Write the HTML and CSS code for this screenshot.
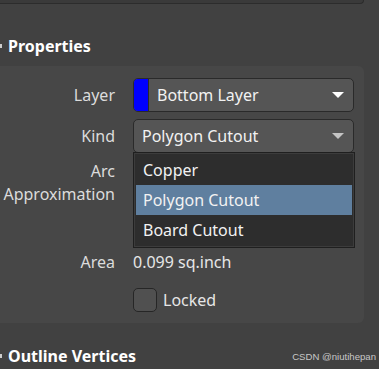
FILE: index.html
```html
<!DOCTYPE html>
<html>
<head>
    <title>Properties</title>
    <link rel="stylesheet" href="styles.css">
</head>
<body>
    <div class="top-box"></div>

    <div class="section-head">
        <span class="arrow"></span>
        <span>Properties</span>
    </div>

    <div class="panel">
        <div class="row">
            <label>Layer</label>
            <div class="combo">
                <span class="swatch"></span>
                <span class="combo-text">Bottom Layer</span>
                <span class="caret"></span>
            </div>
        </div>

        <div class="row kind-row">
            <label>Kind</label>
            <div class="combo">
                <span class="combo-text">Polygon Cutout</span>
                <span class="caret dim"></span>
            </div>
            <!-- open list of the Kind combo -->
            <ul class="drop-list">
                <li>Copper</li>
                <li class="selected">Polygon Cutout</li>
                <li>Board Cutout</li>
            </ul>
        </div>

        <div class="row arc-row">
            <label>Arc<br>Approximation</label>
        </div>

        <div class="row area-row">
            <label>Area</label>
            <div class="value">0.099 sq.inch</div>
        </div>

        <div class="row check-row">
            <label></label>
            <span class="checkbox"></span>
            <span class="value">Locked</span>
        </div>
    </div>

    <div class="section-head bottom">
        <span class="arrow"></span>
        <span>Outline Vertices</span>
        <span class="mark">CSDN @niutihepan</span>
    </div>
</body>
</html>
```

FILE: styles.css
```css
body {
    font-family: "Noto Sans", "Open Sans", sans-serif;
    background-color: #414141;
    color: #dcdcdc;
    margin: 0;
    padding: 0;
    width: 379px;
    height: 369px;
    overflow: hidden;
}

.top-box {
    width: 364px;
    height: 4px;
    background-color: #3a3a3a;
    border-bottom: 1px solid #2c2c2c;
    border-right: 1px solid #2c2c2c;
    border-bottom-right-radius: 4px;
    box-sizing: border-box;
}

.section-head {
    display: flex;
    align-items: center;
    height: 24px;
    margin-top: 30px;
    font-weight: bold;
    font-size: 16px;
    color: #ffffff;
}

.arrow {
    width: 2px;
    height: 4px;
    background-color: #cccccc;
    margin-right: 6px;
}

.section-head.bottom {
    margin-top: 21px;
}

.mark {
    margin-left: auto;
    margin-right: 3px;
    font-family: "Liberation Sans", Arial, sans-serif;
    font-weight: normal;
    font-size: 9.6px;
    color: #c8c8c8;
}

.panel {
    margin-top: 8px;
    width: 364px;
    height: 257px;
    background-color: #474747;
    border-radius: 0 6px 6px 0;
    padding-top: 12px;
    box-sizing: border-box;
}

.row {
    display: flex;
    align-items: center;
    position: relative;
    font-size: 16px;
}

.row label {
    width: 115px;
    text-align: right;
    margin-right: 18px;
    line-height: 23px;
}

.combo {
    display: flex;
    align-items: center;
    width: 221px;
    height: 34px;
    background-color: #555555;
    border: 1px solid #2a2a2a;
    border-radius: 5px;
    box-sizing: border-box;
    overflow: hidden;
    color: #f2f2f2;
}

.swatch {
    width: 14px;
    height: 100%;
    background-color: #0000ff;
    border-right: 1px solid #2a2a2a;
}

.combo-text {
    flex: 1;
    padding-left: 8px;
}

.caret {
    width: 0;
    height: 0;
    border-left: 6px solid transparent;
    border-right: 6px solid transparent;
    border-top: 6px solid #ffffff;
    margin-right: 9px;
}

.caret.dim {
    border-top-color: #c4c4c4;
}

.kind-row {
    margin-top: 7px;
    z-index: 2;
}

.drop-list {
    position: absolute;
    left: 133px;
    top: 33px;
    width: 222px;
    margin: 0;
    padding: 2px;
    list-style: none;
    background-color: #2d2d2d;
    border: 1px solid #1f1f1f;
    box-shadow: inset 0 0 0 1px #3c3c3c;
    box-sizing: border-box;
    color: #f2f2f2;
}

.drop-list li {
    height: 30px;
    line-height: 30px;
    padding-left: 7px;
}

.drop-list li.selected {
    background-color: #5f7f9f;
}

.arc-row {
    margin-top: 7px;
    height: 91px;
    align-items: flex-start;
}

.area-row {
    height: 22px;
}

.check-row {
    margin-top: 15px;
    height: 24px;
}

.checkbox {
    width: 24px;
    height: 24px;
    background-color: #505050;
    border: 1px solid #262626;
    border-radius: 5px;
    box-sizing: border-box;
    margin-right: 6px;
}

.value {
    color: #e6e6e6;
}
```
